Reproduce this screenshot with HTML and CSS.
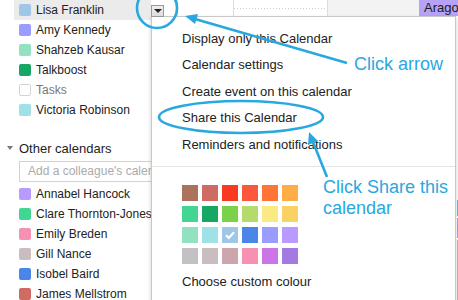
FILE: index.html
```html
<!DOCTYPE html>
<html>
<head>
<meta charset="utf-8">
<link rel="stylesheet" href="styles.css">
</head>
<body>
<div class="screen">
  <aside class="sidebar">
    <ul class="cal-list">
      <li class="cal-row selected"><span class="sw sw-lblue"></span>Lisa Franklin</li>
      <li class="cal-row"><span class="sw sw-periwinkle"></span>Amy Kennedy</li>
      <li class="cal-row"><span class="sw sw-mint"></span>Shahzeb Kausar</li>
      <li class="cal-row"><span class="sw sw-green"></span>Talkboost</li>
      <li class="cal-row muted"><span class="sw sw-empty"></span>Tasks</li>
      <li class="cal-row"><span class="sw sw-aqua"></span>Victoria Robinson</li>
    </ul>
    <div class="section-head"><span class="caret"></span>Other calendars</div>
    <div class="add-box">Add a colleague's calendar</div>
    <ul class="cal-list">
      <li class="cal-row"><span class="sw sw-lavender"></span>Annabel Hancock</li>
      <li class="cal-row"><span class="sw sw-emerald"></span>Clare Thornton-Jones</li>
      <li class="cal-row"><span class="sw sw-pink"></span>Emily Breden</li>
      <li class="cal-row"><span class="sw sw-stone"></span>Gill Nance</li>
      <li class="cal-row"><span class="sw sw-blue"></span>Isobel Baird</li>
      <li class="cal-row"><span class="sw sw-brick"></span>James Mellstrom</li>
    </ul>
  </aside>

  <main class="calendar">
    <div class="cal-head">
      <div class="cell gutter"></div>
      <div class="cell day"></div>
      <div class="cell slot"></div>
      <div class="cell slot shaded"></div>
      <div class="cell event">Arago</div>
    </div>
    <div class="cal-body">
      <div class="edge">
        <span class="ev ev-blue"></span>
        <span class="ev ev-purple"></span>
        <span class="ev ev-pink"></span>
      </div>
    </div>
  </main>

  <div class="menu">
    <span class="menu-btn"><span class="tri"></span></span>
    <div class="menu-item">Display only this Calendar</div>
    <div class="menu-item">Calendar settings</div>
    <div class="menu-item">Create event on this calendar</div>
    <div class="menu-item">Share this Calendar</div>
    <div class="menu-item">Reminders and notifications</div>
    <div class="menu-sep"></div>
    <div class="swatches">
      <span class="sq sw-brown"></span><span class="sq sw-brick"></span><span class="sq sw-red"></span><span class="sq sw-tomato"></span><span class="sq sw-orange"></span><span class="sq sw-amber"></span>
      <span class="sq sw-emerald"></span><span class="sq sw-green"></span><span class="sq sw-lime"></span><span class="sq sw-pistachio"></span><span class="sq sw-lemon"></span><span class="sq sw-gold"></span>
      <span class="sq sw-mint"></span><span class="sq sw-aqua"></span><span class="sq sw-lblue checked"><svg viewBox="0 0 16 16" width="16" height="16"><path d="M4 8.2 L6.8 11 L12 5.2" fill="none" stroke="#fff" stroke-width="2.2"/></svg></span><span class="sq sw-blue"></span><span class="sq sw-periwinkle"></span><span class="sq sw-lavender"></span>
      <span class="sq sw-silver"></span><span class="sq sw-stone"></span><span class="sq sw-rose"></span><span class="sq sw-pink"></span><span class="sq sw-orchid"></span><span class="sq sw-violet"></span>
    </div>
    <div class="custom">Choose custom colour</div>
  </div>

  <svg class="marks" width="458" height="300" viewBox="0 0 458 300">
    <g fill="none" stroke="#29a8e0" stroke-width="2.6">
      <circle cx="157" cy="8" r="20"/>
      <ellipse cx="241" cy="117" rx="82" ry="16"/>
      <line x1="347" y1="63" x2="195" y2="19"/>
      <line x1="327" y1="177" x2="313" y2="142"/>
    </g>
    <g fill="#29a8e0">
      <polygon points="185,16 198,14 195,24"/>
      <polygon points="309,132 318,141 308,145"/>
    </g>
  </svg>
  <div class="note note-arrow">Click arrow</div>
  <div class="note note-share">Click Share this<br>calendar</div>
</div>
</body>
</html>
```
FILE: styles.css
```css
* { box-sizing: border-box; margin: 0; padding: 0; }

body {
  width: 458px;
  height: 300px;
  overflow: hidden;
  background: #fff;
  color: #222;
  font-family: "Liberation Sans", Arial, sans-serif;
}

.screen {
  position: relative;
  width: 458px;
  height: 300px;
  display: flex;
  overflow: hidden;
}

/* ---------- sidebar ---------- */
.sidebar {
  width: 151px;
  flex: none;
  overflow: hidden;
}

.cal-list {
  list-style: none;
  margin-left: 14px;
}

.cal-row {
  height: 20px;
  display: flex;
  align-items: center;
  gap: 5px;
  padding-left: 5px;
  font-size: 12px;
  white-space: nowrap;
}

.cal-row.selected { background: #ebebeb; }
.cal-row.muted { color: #777; }

.sw {
  width: 12px;
  height: 12px;
  flex: none;
  border-radius: 2px;
}

.sw-empty { background: #fff; border: 1px solid #d4d4d4; }

.section-head {
  margin-top: 18px;
  height: 20px;
  display: flex;
  align-items: center;
  gap: 6px;
  padding-left: 7px;
  font-size: 13px;
}

.caret {
  width: 0;
  height: 0;
  border-left: 3px solid transparent;
  border-right: 3px solid transparent;
  border-top: 4px solid #777;
}

.add-box {
  margin: 3px 0 2px 19px;
  width: 150px;
  height: 21px;
  border: 1px solid #d2d2d2;
  padding-left: 8px;
  font-size: 12px;
  line-height: 19px;
  color: #aaa;
  white-space: nowrap;
  overflow: hidden;
}

/* ---------- calendar grid (background) ---------- */
.calendar {
  flex: 1;
  display: flex;
  flex-direction: column;
}

.cal-head {
  height: 16px;
  display: flex;
}

.cell { height: 16px; }
.gutter { width: 26px; }
.day { width: 56px; border-left: 1px solid #ddd; }
.slot {
  width: 94px;
  border-left: 1px solid #ddd;
  background-image: linear-gradient(to right, #ccc 50%, transparent 50%);
  background-size: 3px 1px;
  background-repeat: repeat-x;
  background-position: 0 8px;
}
.slot.shaded { width: 92px; background: #f3f3f3; }

.event {
  flex: 1;
  background: #b6a2f6;
  font-size: 13px;
  line-height: 16px;
  padding-left: 5px;
  color: #1a1a1a;
  white-space: nowrap;
  overflow: hidden;
}

.cal-body {
  flex: 1;
  display: flex;
  justify-content: flex-end;
}

.edge {
  width: 2px;
  display: flex;
  flex-direction: column;
  padding-top: 184px;
  gap: 2px;
}

.ev { display: block; width: 2px; }
.ev-blue { height: 16px; background: #7fb0dd; }
.ev-purple { height: 20px; background: #b39ce6; }
.ev-pink { height: 60px; background: #e8a0b4; }

/* ---------- dropdown menu ---------- */
.menu {
  position: absolute;
  left: 151px;
  top: 16px;
  width: 305px;
  height: 300px;
  background: #fff;
  border: 1px solid #c8c8c8;
  box-shadow: 0 2px 4px rgba(0, 0, 0, 0.2);
  padding-top: 8px;
}

.menu-btn {
  position: absolute;
  left: -1px;
  top: -12px;
  width: 13px;
  height: 12px;
  border: 1px solid #9a9a9a;
  background: linear-gradient(#f0f0f0, #dcdcdc);
  display: flex;
  align-items: center;
  justify-content: center;
}

.tri {
  width: 0;
  height: 0;
  border-left: 4px solid transparent;
  border-right: 4px solid transparent;
  border-top: 4px solid #222;
}

.menu-item {
  height: 26.5px;
  display: flex;
  align-items: center;
  padding-left: 30px;
  font-size: 13px;
  white-space: nowrap;
}

.menu-sep {
  height: 1px;
  margin-top: 8px;
  background: #e3e3e3;
}

.swatches {
  display: grid;
  grid-template-columns: repeat(6, 16px);
  grid-auto-rows: 16px;
  column-gap: 4px;
  row-gap: 5px;
  margin: 18px 0 0 30px;
}

.sq { display: block; }
.sq svg { display: block; }

.custom {
  margin-top: 8px;
  padding-left: 30px;
  font-size: 13px;
  line-height: 20px;
}

/* ---------- palette ---------- */
.sw-brown { background: #ac725e; }
.sw-brick { background: #d06b64; }
.sw-red { background: #f83a22; }
.sw-tomato { background: #fa573c; }
.sw-orange { background: #ff7537; }
.sw-amber { background: #ffad46; }
.sw-emerald { background: #42d692; }
.sw-green { background: #16a765; }
.sw-lime { background: #7bd148; }
.sw-pistachio { background: #b3dc6c; }
.sw-lemon { background: #fbe983; }
.sw-gold { background: #fad165; }
.sw-mint { background: #92e1c0; }
.sw-aqua { background: #9fe1e7; }
.sw-lblue { background: #9fc6e7; }
.sw-blue { background: #4986e7; }
.sw-periwinkle { background: #9a9cff; }
.sw-lavender { background: #b99aff; }
.sw-silver { background: #c2c2c2; }
.sw-stone { background: #cabdbf; }
.sw-rose { background: #cca6ac; }
.sw-pink { background: #f691b2; }
.sw-orchid { background: #cd74e6; }
.sw-violet { background: #a47ae2; }

/* ---------- annotations ---------- */
.marks {
  position: absolute;
  left: 0;
  top: 0;
  pointer-events: none;
}

.note {
  position: absolute;
  color: #29a8e0;
  font-size: 18px;
  line-height: 21px;
  white-space: nowrap;
}

.note-arrow { left: 354px; top: 54px; }
.note-share { left: 323px; top: 177px; }
```
